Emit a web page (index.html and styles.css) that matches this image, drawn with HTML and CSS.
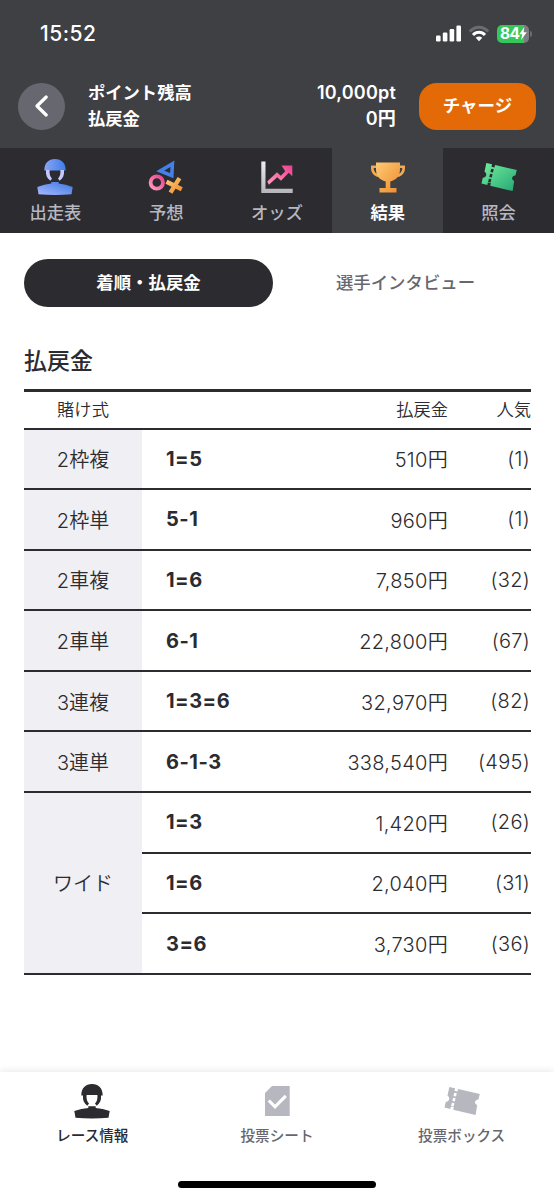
FILE: index.html
```html
<!DOCTYPE html>
<html lang="ja">
<head>
    <meta charset="UTF-8">
    <meta name="viewport" content="width=device-width, initial-scale=1.0">
    <title>払戻金</title>
    <link rel="stylesheet" href="styles.css">
</head>
<body>
    <header>
        <div class="status-bar">
            <span class="clock">15:52</span>
            <div class="status-icons">
                <svg width="26" height="17" viewBox="0 0 26 17" fill="#fff">
                    <rect x="0" y="10.5" width="4.6" height="6" rx="1.2"/>
                    <rect x="6.8" y="7.5" width="4.6" height="9" rx="1.2"/>
                    <rect x="13.6" y="4" width="4.6" height="12.5" rx="1.2"/>
                    <rect x="20.4" y="0.5" width="4.6" height="16" rx="1.2"/>
                </svg>
                <svg class="wifi" width="22" height="17" viewBox="0 0 22 17" fill="none" stroke-width="3">
                    <path d="M1.8 6.6C7 .9 15 .9 20.2 6.6" stroke="#6b6c70"/>
                    <path d="M5 9.9C8.4 6.2 13.6 6.2 17 9.9" stroke="#fff"/>
                    <path d="M11 16.2l-3.3-3.4q3.3-2.7 6.6 0z" fill="#fff"/>
                </svg>
                <div class="battery">
                    <span>84</span>
                    <svg width="8" height="13" viewBox="0 0 7 12" fill="#fff"><path d="M4.8 0L0 6.8h2.8L1.7 12 7 4.8H4z"/></svg>
                </div>
            </div>
        </div>
        <div class="account">
            <button class="back">
                <svg width="14" height="22" viewBox="0 0 14 22" fill="none" stroke="#fff" stroke-width="3.2" stroke-linecap="round" stroke-linejoin="round"><path d="M11.2 2L2 11l9.2 9"/></svg>
            </button>
            <dl class="balance">
                <div><dt>ポイント残高</dt><dd>10,000pt</dd></div>
                <div><dt>払戻金</dt><dd>0円</dd></div>
            </dl>
            <button class="charge">チャージ</button>
        </div>
    </header>

    <nav class="menu">
        <a>
            <svg width="36" height="38" viewBox="0 0 36 38">
                <defs>
                    <linearGradient id="blue" x1="0" y1="1" x2="1" y2="0"><stop offset="0" stop-color="#a9b8ff"/><stop offset="1" stop-color="#3a76e0"/></linearGradient>
                    <linearGradient id="helmet" x1="0" y1="0" x2="1" y2="0"><stop offset="0" stop-color="#8ba4f5"/><stop offset="1" stop-color="#3f7de8"/></linearGradient>
                </defs>
                <path d="M7.300 12.500C7.300 5 11.500 1 18 1s10.700 4 10.700 11.500z" fill="url(#helmet)"/>
                <path d="M9 12h3.600c-.4 4.300.6 6.600 2.400 8.400l-1.600 2.400C10 20.500 8.500 17 9 12zM27 12h-3.600c.4 4.300-.6 6.600-2.400 8.400l1.600 2.400C26 20.500 27.500 17 27 12z" fill="#c5c9ff"/>
                <path d="M.3 29q7-3 14-3.500v-1.500h7.400v1.500q7 .5 14 3.500l-1.200 7.200q-16.500 1.600-33 0z" fill="url(#blue)"/>
            </svg>
            <span>出走表</span>
        </a>
        <a>
            <svg width="36" height="38" viewBox="0 0 36 38">
                <defs>
                    <linearGradient id="pink" x1="1" y1="0" x2="0" y2="1"><stop offset="0" stop-color="#ed3f8c"/><stop offset="1" stop-color="#ff9dc0"/></linearGradient>
                    <linearGradient id="gold" x1="0" y1="0" x2="1" y2="1"><stop offset="0" stop-color="#ffca76"/><stop offset="1" stop-color="#ed8b2d"/></linearGradient>
                </defs>
                <path d="M24.400 5.700L23.800 17.700 12.200 12.900z" fill="none" stroke="#4480ea" stroke-width="3.600"/>
                <circle cx="8.800" cy="24.500" r="6.200" fill="none" stroke="url(#pink)" stroke-width="3.800"/>
                <path d="M18.500 23.700l15.300 7.600M31.500 20.200l-9 14.500" stroke="url(#gold)" stroke-width="4.400"/>
            </svg>
            <span>予想</span>
        </a>
        <a>
            <svg width="36" height="38" viewBox="0 0 36 38">
                <defs>
                    <linearGradient id="silver" x1="0" y1="0" x2="0" y2="1"><stop offset="0" stop-color="#eeeeef"/><stop offset="1" stop-color="#b5b5b9"/></linearGradient>
                </defs>
                <path d="M2.300 3.500h4.200v27.300h27.200v4.300H2.300z" fill="url(#silver)"/>
                <path d="M22.500 7.500h10.800v10.700l-3.500-3.400-7.800 8-3.800-3.600-8.300 7.500-1.700-3.200 9.800-9.300 3.800 3.500 4.400-4.500z" fill="url(#pink)"/>
            </svg>
            <span>オッズ</span>
        </a>
        <a class="active">
            <svg width="36" height="38" viewBox="0 0 36 38">
                <path d="M6.500 8.800H2.300C2 14.500 5 17.900 10.500 17.900M29.500 8.800h4.200C34 14.500 31 17.900 25.500 17.900" fill="none" stroke="#f2aa50" stroke-width="2.600"/>
                <path d="M6 4.500h24v6.500C30 18 26.500 22 20.300 23.400v6.600h6.200V34.500h-17V30h6.200v-6.600C9.500 22 6 18 6 11z" fill="url(#gold)"/>
            </svg>
            <span>結果</span>
        </a>
        <a>
            <svg width="36" height="38" viewBox="0 0 36 38">
                <defs>
                    <linearGradient id="green" x1="0" y1="0" x2="1" y2="1"><stop offset="0" stop-color="#74ee9d"/><stop offset="1" stop-color="#24a674"/></linearGradient>
                </defs>
                <path d="M5.300 5l5.800 1.300-.6 2.500 3 .7.600-2.400 21.700 5-1.400 5.400c-4 .2-4.300 4.200-1.200 5.600L31.600 33 9.200 27.700l.7-2.500-3-.7-.6 2.400L.5 25.500l1.300-5.700c3.700 0 4.700-4.500 1.700-6.100z" fill="url(#green)"/>
                <path d="M11.500 11L8.300 24.500" stroke="#2b2b30" stroke-width="2.600" stroke-dasharray="3.400 1.700"/>
            </svg>
            <span>照会</span>
        </a>
    </nav>

    <main>
        <div class="tabs">
            <a class="active">着順・払戻金</a>
            <a>選手インタビュー</a>
        </div>
        <h1>払戻金</h1>
        <table>
            <thead>
                <tr>
                    <th class="type">賭け式</th>
                    <th class="combo"></th>
                    <th class="payout">払戻金</th>
                    <th class="rank">人気</th>
                </tr>
            </thead>
            <tbody>
                <tr><th>2枠複</th><td class="combo">1=5</td><td class="payout">510円</td><td class="rank">(1)</td></tr>
                <tr><th>2枠単</th><td class="combo">5-1</td><td class="payout">960円</td><td class="rank">(1)</td></tr>
                <tr><th>2車複</th><td class="combo">1=6</td><td class="payout">7,850円</td><td class="rank">(32)</td></tr>
                <tr><th>2車単</th><td class="combo">6-1</td><td class="payout">22,800円</td><td class="rank">(67)</td></tr>
                <tr><th>3連複</th><td class="combo">1=3=6</td><td class="payout">32,970円</td><td class="rank">(82)</td></tr>
                <tr><th>3連単</th><td class="combo">6-1-3</td><td class="payout">338,540円</td><td class="rank">(495)</td></tr>
                <tr><th rowspan="3">ワイド</th><td class="combo">1=3</td><td class="payout">1,420円</td><td class="rank">(26)</td></tr>
                <tr><td class="combo">1=6</td><td class="payout">2,040円</td><td class="rank">(31)</td></tr>
                <tr><td class="combo">3=6</td><td class="payout">3,730円</td><td class="rank">(36)</td></tr>
            </tbody>
        </table>
    </main>

    <footer>
        <nav class="bottom-nav">
            <a class="active">
                <svg width="36" height="38" viewBox="0 0 36 38" fill="#2b2b30">
                    <path d="M7.300 12.500C7.300 5 11.500 1 18 1s10.700 4 10.700 11.500L27 12.500c.5 4.500-1 8-4.400 10.300L21 20.400c1.800-1.800 2.800-4.100 2.400-8.400H12.600c-.4 4.300.6 6.600 2.400 8.400l-1.600 2.400C10 20.500 8.500 17 9 12.500z"/>
                    <path d="M.3 28q7-2.700 14-3v-1.700h7.400V25q7 .3 14 3l-1.200 6.700q-16.500 1.600-33 0z"/>
                </svg>
                <span>レース情報</span>
            </a>
            <a>
                <svg width="36" height="38" viewBox="0 0 36 38">
                    <path d="M13 3h17.700v30H6V10z" fill="#b7b7c0"/>
                    <path d="M9.800 17.500l6.200 6.300 10.800-11" fill="none" stroke="#fff" stroke-width="3.200"/>
                </svg>
                <span>投票シート</span>
            </a>
            <a>
                <svg width="36" height="38" viewBox="0 0 36 38">
                    <path d="M5.300 4l5.800 1.300-.6 2.500 3 .7.600-2.400 21.700 5-1.400 5.400c-4 .2-4.300 4.200-1.200 5.600L31.600 32 9.200 26.700l.7-2.500-3-.7-.6 2.400L.5 24.500l1.300-5.700c3.700 0 4.700-4.500 1.700-6.100z" fill="#b7b7c0"/>
                    <path d="M11.500 10L8.300 23.500" stroke="#fff" stroke-width="2.600" stroke-dasharray="3.400 1.700"/>
                </svg>
                <span>投票ボックス</span>
            </a>
        </nav>
        <div class="home-indicator"></div>
    </footer>
</body>
</html>
```
FILE: styles.css
```css
* {
    box-sizing: border-box;
}
body {
    display: flex;
    flex-direction: column;
    height: 1200px;
    margin: 0;
    font-family: Inter, "Noto Sans CJK JP", sans-serif;
    color: #2b2b30;
    background-color: #fff;
}
button {
    border: 0;
    padding: 0;
    font-family: inherit;
    color: #fff;
}
header {
    height: 148px;
    background-color: #3f4044;
    color: #fff;
}

/* status bar */
.status-bar {
    display: flex;
    justify-content: space-between;
    align-items: center;
    height: 67px;
    padding: 0 25px 0 40px;
}
.clock {
    font-size: 21px;
    font-weight: 500;
    letter-spacing: 0.5px;
}
.status-icons {
    display: flex;
    align-items: center;
    margin-right: -3px;
}
.wifi {
    margin: 0 7px 0 6px;
}
.battery {
    position: relative;
    display: flex;
    align-items: center;
    width: 32px;
    height: 18px;
    margin-right: 3px;
    padding-left: 3px;
    border-radius: 5px;
    background: linear-gradient(90deg, #35c759 84%, #7b7b80 84%);
    font-size: 15.500px;
    font-weight: 700;
    letter-spacing: -0.6px;
}
.battery::after {
    content: "";
    position: absolute;
    right: -3px;
    top: 6px;
    width: 2px;
    height: 6px;
    border-radius: 0 2px 2px 0;
    background-color: #6b6c70;
}

/* balance */
.account {
    display: flex;
    align-items: center;
    height: 78px;
    padding: 0 18px;
}
.back {
    display: flex;
    align-items: center;
    justify-content: center;
    width: 47px;
    height: 47px;
    border-radius: 50%;
    background-color: #676770;
}
.balance {
    flex: 1;
    margin: 0 23px;
    font-size: 17.300px;
    font-weight: 600;
    line-height: 26px;
}
.balance div {
    display: flex;
    justify-content: space-between;
}
.balance dd {
    margin: 0;
    font-size: 18px;
    letter-spacing: 0.2px;
}
.charge {
    width: 117px;
    height: 47px;
    padding-bottom: 3px;
    border-radius: 18px;
    background-color: #e46a07;
    font-size: 17.500px;
    font-weight: 700;
}

/* menu */
.menu {
    display: grid;
    grid-template-columns: repeat(5, 1fr);
    height: 85px;
    background-color: #2b2b30;
    color: #b7b7c0;
}
.menu a {
    display: flex;
    flex-direction: column;
    align-items: center;
    padding-top: 10px;
    font-size: 17.300px;
    font-weight: 500;
    line-height: 33px;
}
.menu .active {
    background-color: #3f4044;
    color: #fff;
    font-weight: 700;
}

/* results */
main {
    flex: 1;
    padding: 26px 24px 0;
}
.tabs {
    display: grid;
    grid-template-columns: 249px 249px;
    column-gap: 8px;
    font-size: 17.400px;
    font-weight: 500;
    line-height: 48px;
    text-align: center;
    color: #676770;
}
.tabs .active {
    height: 48px;
    border-radius: 24px;
    background-color: #2b2b30;
    color: #fff;
    font-weight: 700;
}
h1 {
    margin: 37px 0 11px;
    font-size: 23px;
    font-weight: 500;
    line-height: 34px;
}
table {
    width: 507px;
    border-collapse: collapse;
    table-layout: fixed;
    border-top: 3px solid #2b2b30;
}
tr {
    border-bottom: 2px solid #2b2b30;
}
th, td {
    height: 60.600px;
    padding: 0;
    font-size: 20px;
    font-weight: 350;
    text-align: right;
}
thead th {
    height: 38px;
    padding-bottom: 3px;
    font-size: 17.300px;
}
tbody th {
    background-color: #f0eff4;
    text-align: center;
}
.type {
    width: 118px;
    text-align: center;
}
.combo {
    width: 159px;
    padding-left: 24px;
    text-align: left;
}
td.combo {
    font-weight: 700;
    letter-spacing: 0.5px;
}
.payout {
    width: 147px;
}
td.payout, td.rank {
    letter-spacing: 0.3px;
}
td.rank {
    padding-right: 1px;
}
.rank {
    width: 83px;
}

/* bottom navigation */
footer {
    height: 128px;
    box-shadow: 0 -2px 6px rgba(0, 0, 0, 0.08);
}
.bottom-nav {
    display: grid;
    grid-template-columns: repeat(3, 1fr);
    height: 109px;
    color: #676770;
}
.bottom-nav a {
    display: flex;
    flex-direction: column;
    align-items: center;
    padding-top: 11px;
    font-size: 14.600px;
    font-weight: 500;
    line-height: 30px;
}
.bottom-nav .active {
    color: #2b2b30;
}
.home-indicator {
    width: 198px;
    height: 7px;
    margin: 0 auto;
    border-radius: 4px;
    background-color: #000;
}
```
